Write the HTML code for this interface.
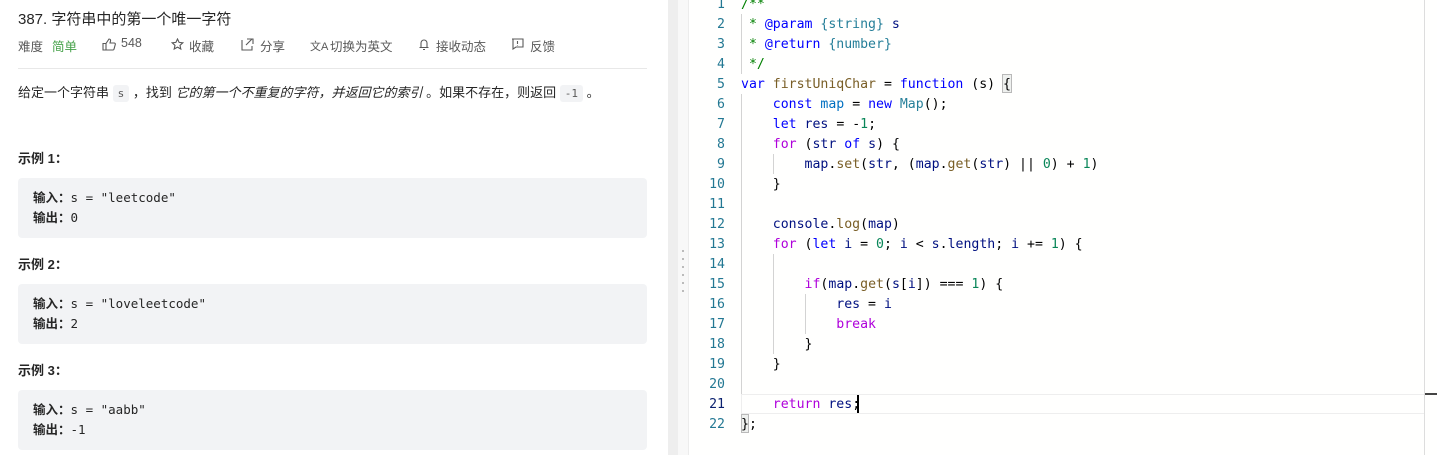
<!DOCTYPE html>
<html><head><meta charset="utf-8"><style>
*{margin:0;padding:0;box-sizing:border-box}
body{width:1437px;height:455px;overflow:hidden;background:#fff;font-family:"Liberation Sans","Noto Sans CJK SC",sans-serif;color:#262626;position:relative}
.left{position:absolute;left:0;top:0;width:668px;height:455px;background:#fff}
.abs{position:absolute;white-space:nowrap}
.title{left:18px;top:8px;font-size:15px;color:#262626}
.meta{top:36px;font-size:12.5px;color:#595959}
.ic{top:38px;position:absolute}
.hr{position:absolute;left:18px;top:68px;width:629px;height:1px;background:#e8e8e8}
.p{left:18px;top:82px;font-size:13px;color:#262626}
.code{font-family:"DejaVu Sans Mono",monospace;font-size:11px;background:#f2f3f5;border-radius:3px;padding:2px 5px;color:#595959}
.h{left:18px;font-size:13px;font-weight:bold;color:#262626}
.pre{position:absolute;left:18px;width:629px;height:60px;background:#f2f3f5;border-radius:4px;font-family:"DejaVu Sans Mono","Noto Sans CJK SC",monospace;font-size:12.5px;color:#262626;padding:10px 0 0 15px;line-height:20px}
.pre b{font-family:"Liberation Sans","Noto Sans CJK SC",sans-serif}
.div1{position:absolute;left:668px;top:0;width:10px;height:455px;background:#eeeeee}
.div2{position:absolute;left:678px;top:0;width:11px;height:455px;background:#f8f8f8;border-right:1px solid #ececec}
.dot{position:absolute;left:682px;width:2px;height:2px;background:#bbb}
.ed{position:absolute;left:690px;top:0;width:747px;height:455px;background:#fffffe}
.ln{position:absolute;left:690px;width:35px;text-align:right;font-family:"DejaVu Sans Mono",monospace;font-size:13.2px;color:#237893}
.cl{position:absolute;left:741px;font-family:"DejaVu Sans Mono",monospace;font-size:13.2px;color:#000;white-space:pre}
.k{color:#0000ff}.c{color:#008000}.f{color:#795e26}.v{color:#001080}.t{color:#267f99}.n{color:#098658}.m{color:#af00db}.ct{color:#267f99}
.guide{position:absolute;width:1px;background:#d3d3d3}
</style></head><body>
<div class="left">
<div class="abs title">387. 字符串中的第一个唯一字符</div>
<div class="abs meta" style="left:18px">难度</div>
<div class="abs meta" style="left:52px;color:#43a047">简单</div>
<svg class="ic" style="left:102px" width="14" height="13" viewBox="0 0 14 13"><path d="M1 5.5h3v6.5H1zM4 5.5L7 1c1.2 0 1.8.8 1.5 2L8 5h4.2c.8 0 1.3.7 1.1 1.4l-1.3 4.8c-.2.5-.6.8-1.1.8H4" fill="none" stroke="#595959" stroke-width="1.1"/></svg>
<div class="abs meta" style="left:121px">548</div>
<svg class="ic" style="left:171px" width="13" height="13" viewBox="0 0 13 13"><path d="M6.5 1l1.6 3.4 3.7.4-2.8 2.5.8 3.7-3.3-1.9-3.3 1.9.8-3.7L1.2 4.8l3.7-.4z" fill="none" stroke="#595959" stroke-width="1.1"/></svg>
<div class="abs meta" style="left:189px">收藏</div>
<svg class="ic" style="left:241px" width="13" height="13" viewBox="0 0 13 13"><path d="M1 2v10h10V8M6 1h6v5M5 7l6-6" fill="none" stroke="#595959" stroke-width="1.1"/></svg>
<div class="abs meta" style="left:260px">分享</div>
<div class="abs meta" style="left:310px;font-size:11px;top:38px">文A</div>
<div class="abs meta" style="left:330px">切换为英文</div>
<svg class="ic" style="left:418px" width="12" height="13" viewBox="0 0 12 13"><path d="M3 9V5a3 3 0 016 0v4M1.5 9.5h9M5 11.5h2" fill="none" stroke="#595959" stroke-width="1.1"/></svg>
<div class="abs meta" style="left:436px">接收动态</div>
<svg class="ic" style="left:511px" width="13" height="12" viewBox="0 0 13 12"><path d="M1 1h11v8H5l-3 2V1zM6.5 3v3M6.5 7v.5" fill="none" stroke="#595959" stroke-width="1.1"/></svg>
<div class="abs meta" style="left:530px">反馈</div>
<div class="hr"></div>
<div class="abs p">给定一个字符串 <span class="code">s</span> ，找到 <i>它的第一个不重复的字符，并返回它的索引</i> 。如果不存在，则返回 <span class="code">-1</span> 。</div>
<div class="abs h" style="top:148px">示例 1：</div>
<div class="pre" style="top:178px"><b>输入：</b>s = "leetcode"<br><b>输出：</b>0</div>
<div class="abs h" style="top:254px">示例 2：</div>
<div class="pre" style="top:284px"><b>输入：</b>s = "loveleetcode"<br><b>输出：</b>2</div>
<div class="abs h" style="top:360px">示例 3：</div>
<div class="pre" style="top:390px"><b>输入：</b>s = "aabb"<br><b>输出：</b>-1</div>
</div>
<div class="div1"></div><div class="div2"></div>
<div class="dot" style="top:250px"></div><div class="dot" style="top:258px"></div><div class="dot" style="top:266px"></div><div class="dot" style="top:274px"></div><div class="dot" style="top:282px"></div><div class="dot" style="top:290px"></div>
<div class="ed"></div>
<div style="position:absolute;left:741px;top:394px;width:683px;height:20px;border:1px solid #eeeeee;border-right:none"></div>
<div style="position:absolute;left:1424px;top:0;width:1px;height:455px;background:#ddd"></div>
<div style="position:absolute;left:1425px;top:393px;width:12px;height:2px;background:#444"></div>
<div class="guide" style="left:741px;top:14px;height:60px"></div>
<div class="guide" style="left:741px;top:94px;height:300px"></div>
<div class="guide" style="left:773px;top:154px;height:20px"></div>
<div class="guide" style="left:773px;top:254px;height:100px"></div>
<div class="guide" style="left:805px;top:294px;height:40px"></div>
<div style="position:absolute;left:1002px;top:74px;width:10px;height:19px;border:1px solid #b9b9b9;background:#eef0ee"></div>
<div style="position:absolute;left:741px;top:414px;width:8px;height:19px;border:1px solid #b9b9b9;background:#eef0ee"></div>
<div style="position:absolute;left:857px;top:395px;width:2px;height:18px;background:#000"></div>
<div id="lines"></div>
<script>
var L=[
'<span class="c">/**</span>',
'<span class="c"> * </span><span class="k">@param</span><span class="c"> </span><span class="ct">{string}</span><span class="c"> </span><span class="v">s</span>',
'<span class="c"> * </span><span class="k">@return</span><span class="c"> </span><span class="ct">{number}</span>',
'<span class="c"> */</span>',
'<span class="k">var</span> <span class="f">firstUniqChar</span> = <span class="k">function</span> (s) {',
'    <span class="k">const</span> <span style="color:#0070c1">map</span> = <span class="k">new</span> <span class="t">Map</span>();',
'    <span class="k">let</span> <span class="v">res</span> = -<span class="n">1</span>;',
'    <span class="m">for</span> (<span class="v">str</span> <span class="k">of</span> <span class="v">s</span>) {',
'        <span class="v">map</span>.<span class="f">set</span>(<span class="v">str</span>, (<span class="v">map</span>.<span class="f">get</span>(<span class="v">str</span>) || <span class="n">0</span>) + <span class="n">1</span>)',
'    }',
'',
'    <span class="v">console</span>.<span class="f">log</span>(<span class="v">map</span>)',
'    <span class="m">for</span> (<span class="k">let</span> <span class="v">i</span> = <span class="n">0</span>; <span class="v">i</span> &lt; <span class="v">s</span>.<span class="v">length</span>; <span class="v">i</span> += <span class="n">1</span>) {',
'',
'        <span class="m">if</span>(<span class="v">map</span>.<span class="f">get</span>(<span class="v">s</span>[<span class="v">i</span>]) === <span class="n">1</span>) {',
'            <span class="v">res</span> = <span class="v">i</span>',
'            <span class="m">break</span>',
'        }',
'    }',
'',
'    <span class="m">return</span> <span class="v">res</span>;',
'};'];
var h='';
for(var i=0;i<L.length;i++){var y=i*20-3;
h+='<div class="ln" style="top:'+y+'px;'+(i==20?'color:#0b216f':'')+'">'+(i+1)+'</div><div class="cl" style="top:'+y+'px">'+L[i]+'</div>';}
document.getElementById('lines').innerHTML=h;
</script>
</body></html>
